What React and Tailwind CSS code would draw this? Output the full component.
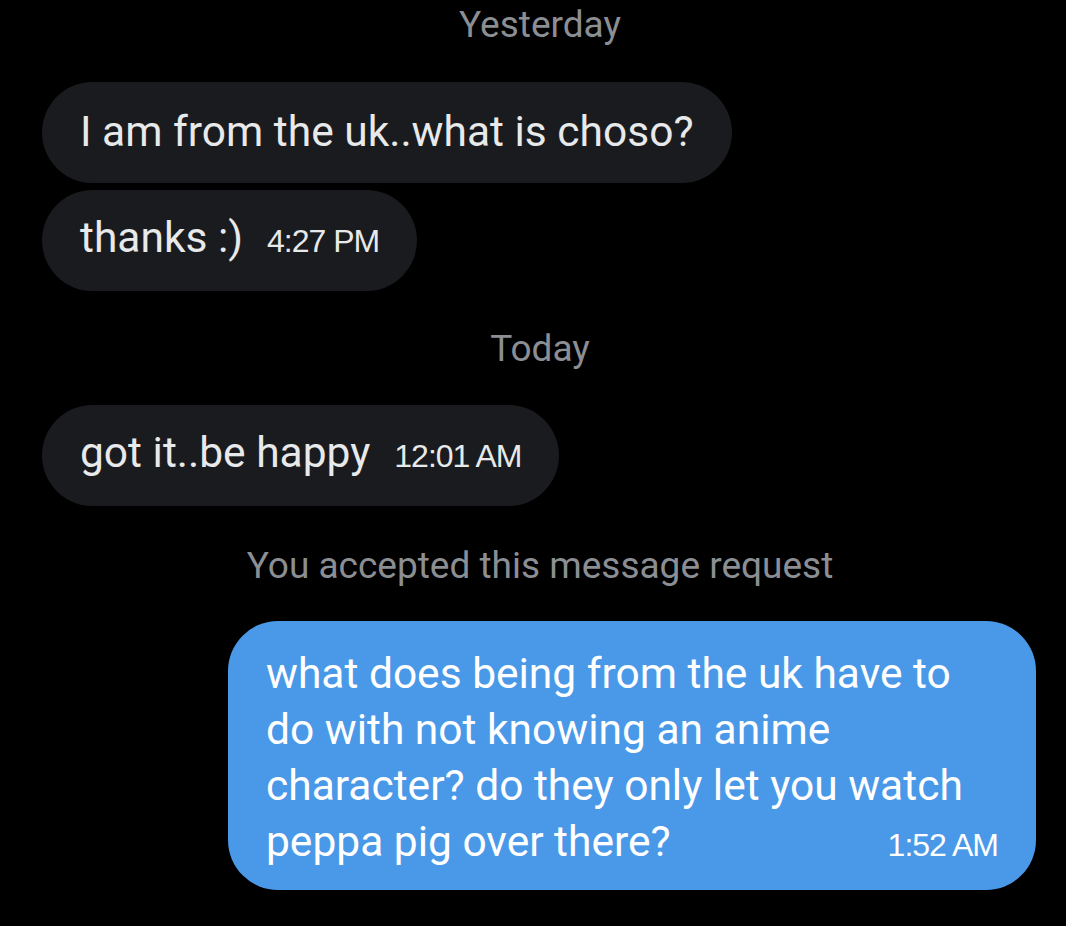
import React from 'react';

const Stamp = ({ children }) => (
  <p className="text-center text-[37px] text-[#8b8e93] leading-none pl-[14px]">{children}</p>
);

const Time = ({ children, white }) => (
  <span className={white
    ? "text-[32px] text-white font-['Liberation_Sans',sans-serif] tracking-[-1px] whitespace-nowrap"
    : "text-[32px] text-[#e7e9ea] font-['Liberation_Sans',sans-serif] tracking-[-1px] whitespace-nowrap"}>
    {children}
  </span>
);

const Bubble = ({ text, time }) => (
  <div className="self-start flex items-center h-[101px] bg-[#1a1b1e] rounded-full px-[38px]">
    <span className="flex items-baseline gap-[24px]">
      <span className="text-[42.5px] text-[#e7e9ea] leading-none">{text}</span>
      {time && <Time>{time}</Time>}
    </span>
  </div>
);

const App = () => {
  return (
    <div className="w-[1066px] h-[926px] bg-black overflow-hidden font-['Roboto',sans-serif] flex flex-col px-[42px]">
      <div className="pt-[6px]">
        <Stamp>Yesterday</Stamp>
      </div>
      <div className="mt-[39px] flex flex-col gap-[7px]">
        <Bubble text="I am from the uk..what is choso?" />
        <Bubble text="thanks :)" time="4:27 PM" />
      </div>
      <div className="mt-[39px]">
        <Stamp>Today</Stamp>
      </div>
      <div className="mt-[38px] flex flex-col">
        <Bubble text="got it..be happy" time="12:01 AM" />
      </div>
      <div className="mt-[41px]">
        <Stamp>You accepted this message request</Stamp>
      </div>
      <div className="mt-[37px] self-end mr-[-12px] w-[808px] h-[269px] bg-[#4a99e8] rounded-[50px] pl-[38px] pr-[38px] pt-[25px]">
        <p className="text-[42.5px] text-white leading-[56px] whitespace-nowrap">
          what does being from the uk have to<br />
          do with not knowing an anime<br />
          character? do they only let you watch
        </p>
        <div className="flex items-baseline justify-between">
          <span className="text-[42.5px] text-white leading-[56px]">peppa pig over there?</span>
          <Time white>1:52 AM</Time>
        </div>
      </div>
    </div>
  );
};

export default App;
